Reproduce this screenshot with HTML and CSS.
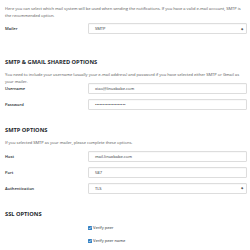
FILE: index.html
```html
<!DOCTYPE html>
<html>
<head>
<meta charset="utf-8">
<link rel="stylesheet" href="styles.css">
</head>
<body>
<div class="page">
  <p class="desc">Here you can select which mail system will be used when sending the notifications. If you have a valid e-mail account, SMTP is the recommended option.</p>
  <div class="row first">
    <div class="label">Mailer</div>
    <div class="field select"><span>SMTP</span><span class="arrow">&#x25C6;</span></div>
  </div>

  <h2 class="heading h-shared">SMTP &amp; GMAIL SHARED OPTIONS</h2>
  <p class="desc">You need to include your username (usually your e-mail address) and password if you have selected either SMTP or Gmail as your mailer.</p>
  <div class="row tight">
    <div class="label">Username</div>
    <div class="field"><span>xiao@linuxbabe.com</span></div>
  </div>
  <div class="row">
    <div class="label">Password</div>
    <div class="field"><span>&bull;&bull;&bull;&bull;&bull;&bull;&bull;&bull;&bull;&bull;&bull;&bull;&bull;&bull;&bull;&bull;&bull;&bull;&bull;&bull;</span></div>
  </div>

  <h2 class="heading">SMTP OPTIONS</h2>
  <p class="desc">If you selected SMTP as your mailer, please complete these options.</p>
  <div class="row after-desc">
    <div class="label">Host</div>
    <div class="field"><span>mail.linuxbabe.com</span></div>
  </div>
  <div class="row">
    <div class="label">Port</div>
    <div class="field"><span>587</span></div>
  </div>
  <div class="row">
    <div class="label">Authentication</div>
    <div class="field select"><span>TLS</span><span class="arrow">&#x25C6;</span></div>
  </div>

  <h2 class="heading h-ssl">SSL OPTIONS</h2>
  <div class="checks">
    <label class="check"><span class="box"><svg viewBox="0 0 10 10" width="4" height="4"><path d="M2 5.2 L4.2 7.4 L8.2 2.8" fill="none" stroke="#fff" stroke-width="1.6"/></svg></span>Verify peer</label>
    <label class="check"><span class="box"><svg viewBox="0 0 10 10" width="4" height="4"><path d="M2 5.2 L4.2 7.4 L8.2 2.8" fill="none" stroke="#fff" stroke-width="1.6"/></svg></span>Verify peer name</label>
  </div>
</div>
</body>
</html>
```

FILE: styles.css
```css
html, body {
  margin: 0;
  padding: 0;
  background: #fff;
}
.page {
  padding: 6px 3px 0 5px;
  font-family: "Open Sans", "Liberation Sans", sans-serif;
  font-size: 4.05px;
  color: #555;
}
.desc {
  margin: 0;
  line-height: 6.5px;
}
.row {
  display: flex;
  align-items: center;
  height: 11px;
  margin-top: 5px;
}
.row.first {
  margin-top: 4px;
}
.row.tight {
  margin-top: -2px;
}
.row.after-desc {
  margin-top: 4.5px;
}
.label {
  width: 83px;
  flex: none;
  font-weight: 600;
  color: #23282d;
}
.field {
  flex: 1;
  height: 11px;
  box-sizing: border-box;
  border: 0.5px solid #ddd;
  border-radius: 1px;
  display: flex;
  align-items: center;
  padding: 0 3px 0 6px;
  color: #32373c;
  box-shadow: inset 0 0.5px 1px rgba(0,0,0,0.05);
}
.select {
  justify-content: space-between;
}
.arrow {
  font-size: 3px;
  color: #555;
}
.heading {
  margin: 16.5px 0 7px;
  font-size: 5.7px;
  line-height: 6px;
  font-weight: 700;
  color: #23282d;
}
.heading.h-shared {
  margin-top: 25px;
}
.heading.h-ssl {
  margin: 17.5px 0 0;
}
.checks {
  padding-left: 83px;
  margin-top: 8px;
  display: flex;
  flex-direction: column;
  gap: 7.5px;
}
.check {
  display: flex;
  align-items: center;
  gap: 1px;
  color: #23282d;
  line-height: 5.5px;
}
.box {
  width: 4px;
  height: 4px;
  background: #3582c4;
  border-radius: 0.5px;
  display: flex;
  align-items: center;
  justify-content: center;
}
```
